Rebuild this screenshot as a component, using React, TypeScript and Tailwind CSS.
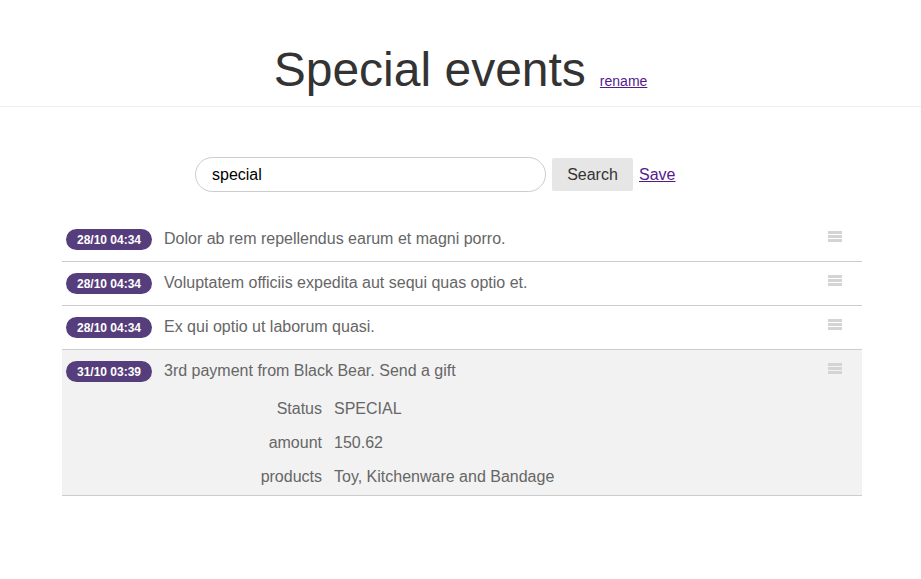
import React from 'react';

interface EventItem {
    date: string;
    title: string;
    details?: { label: string; value: string }[];
}

const events: EventItem[] = [
    { date: '28/10 04:34', title: 'Dolor ab rem repellendus earum et magni porro.' },
    { date: '28/10 04:34', title: 'Voluptatem officiis expedita aut sequi quas optio et.' },
    { date: '28/10 04:34', title: 'Ex qui optio ut laborum quasi.' },
    {
        date: '31/10 03:39',
        title: '3rd payment from Black Bear. Send a gift',
        details: [
            { label: 'Status', value: 'SPECIAL' },
            { label: 'amount', value: '150.62' },
            { label: 'products', value: 'Toy, Kitchenware and Bandage' }
        ]
    }
];

function MenuIcon() {
    return (
        <div className="flex flex-col gap-[1px] w-[14px] mt-[2px]">
            <div className="h-[3px] bg-[#d4d4d4]"></div>
            <div className="h-[3px] bg-[#d4d4d4]"></div>
            <div className="h-[3px] bg-[#d4d4d4]"></div>
        </div>
    );
}

export default function App() {
    return (
        <div className="min-h-screen bg-white font-['Liberation_Sans',Helvetica,Arial,sans-serif]">
            {/* Header */}
            <div className="flex items-baseline justify-center pt-[46px] pb-[12px] border-b border-[#eeeeee]">
                <h1 className="text-[48px] leading-[48px] font-normal text-[#333333]">Special events</h1>
                <a href="#" className="ml-[14px] text-[14px] text-[#551a8b] underline">rename</a>
            </div>

            {/* Search */}
            <div className="flex items-center pl-[195px] mt-[50px]">
                <input
                    defaultValue="special"
                    className="w-[351px] h-[35px] rounded-full border border-[#cccccc] pl-[16px] text-[16px] text-black outline-none"
                />
                <button className="ml-[6px] w-[81px] h-[33px] bg-[#e6e6e6] rounded-[2px] text-[16px] text-[#333333]">Search</button>
                <a href="#" className="ml-[6px] text-[16px] text-[#551a8b] underline">Save</a>
            </div>

            {/* Event list */}
            <div className="ml-[62px] w-[800px] mt-[26px]">
                {events.map((ev, i) => (
                    <div
                        key={i}
                        className={`border-b border-[#cccccc] ${ev.details ? 'bg-[#f2f2f2] pb-[8px]' : ''}`}
                    >
                        <div className="flex items-start pt-[11px] pb-[11px] pl-[4px] pr-[20px]">
                            <span className="h-[21px] w-[86px] flex items-center justify-center rounded-full bg-[#563d7c] text-white text-[12px] font-bold">
                                {ev.date}
                            </span>
                            <span className="ml-[12px] flex-1 text-[16px] leading-[20px] text-[#666666]">{ev.title}</span>
                            <MenuIcon />
                        </div>
                        {ev.details && (
                            <div className="flex flex-col gap-[14px] mt-[6px]">
                                {ev.details.map((d) => (
                                    <div key={d.label} className="flex text-[16px] leading-[20px] text-[#666666]">
                                        <span className="w-[260px] text-right">{d.label}</span>
                                        <span className="ml-[12px]">{d.value}</span>
                                    </div>
                                ))}
                            </div>
                        )}
                    </div>
                ))}
            </div>
        </div>
    );
}
